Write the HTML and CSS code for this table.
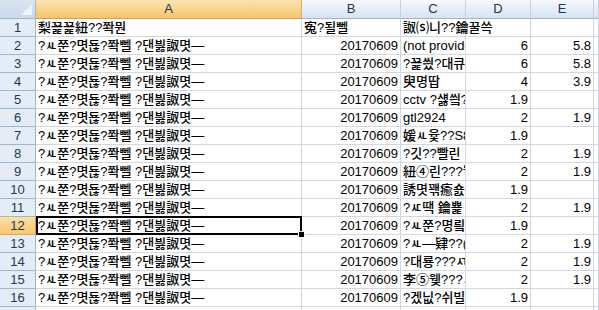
FILE: index.html
```html
<!DOCTYPE html>
<html>
<head>
<meta charset="utf-8">
<link rel="stylesheet" href="styles.css">
</head>
<body>
<div class="sheet">
  <div class="corner"><span class="tri"></span></div>
  <div class="ch sel">A</div>
  <div class="ch">B</div>
  <div class="ch">C</div>
  <div class="ch">D</div>
  <div class="ch">E</div>
  <div class="ch">&nbsp;</div>

  <div class="rh">1</div><div class="c">梨꾩꾩紐??쫙뭔</div><div class="c">寃?될뻴</div><div class="c over">詉⒮니??鑰꿀쓱</div><div class="c"></div><div class="c"></div><div class="c"></div>
  <div class="rh">2</div><div class="c">?ㅻ쭌?몃됺?쫙뻴 ?댄븷詉몃—</div><div class="c n">20170609</div><div class="c">(not provided)</div><div class="c n">6</div><div class="c n">5.8</div><div class="c"></div>
  <div class="rh">3</div><div class="c">?ㅻ쭌?몃됺?쫙뻴 ?댄븷詉몃—</div><div class="c n">20170609</div><div class="c">?꾩씠?대큐</div><div class="c n">6</div><div class="c n">5.8</div><div class="c"></div>
  <div class="rh">4</div><div class="c">?ㅻ쭌?몃됺?쫙뻴 ?댄븷詉몃—</div><div class="c n">20170609</div><div class="c">臾명땁</div><div class="c n">4</div><div class="c n">3.9</div><div class="c"></div>
  <div class="rh">5</div><div class="c">?ㅻ쭌?몃됺?쫙뻴 ?댄븷詉몃—</div><div class="c n">20170609</div><div class="c">cctv ?섏씤?</div><div class="c n">1.9</div><div class="c n"></div><div class="c"></div>
  <div class="rh">6</div><div class="c">?ㅻ쭌?몃됺?쫙뻴 ?댄븷詉몃—</div><div class="c n">20170609</div><div class="c">gtl2924</div><div class="c n">2</div><div class="c n">1.9</div><div class="c"></div>
  <div class="rh">7</div><div class="c">?ㅻ쭌?몃됺?쫙뻴 ?댄븷詉몃—</div><div class="c n">20170609</div><div class="c">媛ㅻ윷??S8</div><div class="c n">1.9</div><div class="c n"></div><div class="c"></div>
  <div class="rh">8</div><div class="c">?ㅻ쭌?몃됺?쫙뻴 ?댄븷詉몃—</div><div class="c n">20170609</div><div class="c">?깃??빨린</div><div class="c n">2</div><div class="c n">1.9</div><div class="c"></div>
  <div class="rh">9</div><div class="c">?ㅻ쭌?몃됺?쫙뻴 ?댄븷詉몃—</div><div class="c n">20170609</div><div class="c">紐④린???뉗</div><div class="c n">2</div><div class="c n">1.9</div><div class="c"></div>
  <div class="rh">10</div><div class="c">?ㅻ쭌?몃됺?쫙뻴 ?댄븷詉몃—</div><div class="c n">20170609</div><div class="c">誘몃꽦癒숈</div><div class="c n">1.9</div><div class="c n"></div><div class="c"></div>
  <div class="rh">11</div><div class="c">?ㅻ쭌?몃됺?쫙뻴 ?댄븷詉몃—</div><div class="c n">20170609</div><div class="c">?ㅼ땍 鑰뾽</div><div class="c n">2</div><div class="c n">1.9</div><div class="c"></div>
  <div class="rh sel">12</div><div class="c active">?ㅻ쭌?몃됺?쫙뻴 ?댄븷詉몃—<span class="handle"></span></div><div class="c n">20170609</div><div class="c">?ㅻ쭌?명릨</div><div class="c n">1.9</div><div class="c n"></div><div class="c"></div>
  <div class="rh">13</div><div class="c">?ㅻ쭌?몃됺?쫙뻴 ?댄븷詉몃—</div><div class="c n">20170609</div><div class="c">?ㅻ—肄??(</div><div class="c n">2</div><div class="c n">1.9</div><div class="c"></div>
  <div class="rh">14</div><div class="c">?ㅻ쭌?몃됺?쫙뻴 ?댄븷詉몃—</div><div class="c n">20170609</div><div class="c">?대룡???ㅺ</div><div class="c n">2</div><div class="c n">1.9</div><div class="c"></div>
  <div class="rh">15</div><div class="c">?ㅻ쭌?몃됺?쫙뻴 ?댄븷詉몃—</div><div class="c n">20170609</div><div class="c">李⑤웾???ㅻ</div><div class="c n">2</div><div class="c n">1.9</div><div class="c"></div>
  <div class="rh">16</div><div class="c">?ㅻ쭌?몃됺?쫙뻴 ?댄븷詉몃—</div><div class="c n">20170609</div><div class="c">?겠닚?쉬빌</div><div class="c n">1.9</div><div class="c n"></div><div class="c"></div>
  <div class="rh">17</div><div class="c"></div><div class="c"></div><div class="c"></div><div class="c"></div><div class="c"></div><div class="c"></div>
</div>
</body>
</html>
```
FILE: styles.css
```css
* { box-sizing: border-box; }
html, body { margin: 0; padding: 0; background: #fff; }
body { width: 599px; height: 310px; overflow: hidden; }
.sheet {
  display: grid;
  grid-template-columns: 36px 266px 99px 65px 65px 63px 1fr;
  grid-template-rows: 19px;
  grid-auto-rows: 18px;
  font-family: "Liberation Sans", "Noto Sans CJK KR", sans-serif;
  font-size: 13px;
  font-weight: 500;
  color: #000;
}
.corner {
  position: relative;
  background: linear-gradient(#dbe5f3, #c9d8ec);
  border-right: 1px solid #9eb6ce;
  border-bottom: 1px solid #9eb6ce;
}
.tri {
  position: absolute;
  right: 3px;
  bottom: 3px;
  width: 0;
  height: 0;
  border-left: 11px solid transparent;
  border-bottom: 11px solid #eef3fa;
}
.ch {
  background: linear-gradient(#f7f9fd, #e3ebf6 60%, #d9e3f1);
  border-right: 1px solid #c5d2e3;
  border-bottom: 1px solid #9eb6ce;
  text-align: center;
  line-height: 18px;
  color: #27364f;
  font-weight: 400;
}
.ch.sel {
  background: linear-gradient(#fbe3b3, #f8d38c 55%, #f6c66b);
  border-right-color: #f2a44a;
  border-bottom-color: #f29536;
}
.rh {
  background: #e4ecf7;
  border-right: 1px solid #9eb6ce;
  border-bottom: 1px solid #9eb6ce;
  text-align: center;
  line-height: 17px;
  color: #27364f;
  font-weight: 400;
}
.rh.sel {
  background: linear-gradient(#fbe0a8, #f6c66b);
  border-right-color: #f29536;
  border-bottom-color: #f2a44a;
}
.c {
  border-right: 1px solid #d0d7e5;
  border-bottom: 1px solid #d0d7e5;
  white-space: nowrap;
  overflow: hidden;
  line-height: 17px;
  padding: 0 2px;
}
.c.over { overflow: visible; position: relative; z-index: 1; }
.c.n { text-align: right; }
.c.active {
  position: relative;
  overflow: visible;
  z-index: 2;
}
.c.active::after {
  content: "";
  position: absolute;
  left: 0;
  top: -1px;
  right: -1px;
  bottom: -1px;
  border: 2px solid #000;
  pointer-events: none;
}
.handle {
  position: absolute;
  right: -4px;
  bottom: -4px;
  width: 7px;
  height: 7px;
  background: #000;
  border: 1px solid #fff;
  z-index: 3;
}
```
